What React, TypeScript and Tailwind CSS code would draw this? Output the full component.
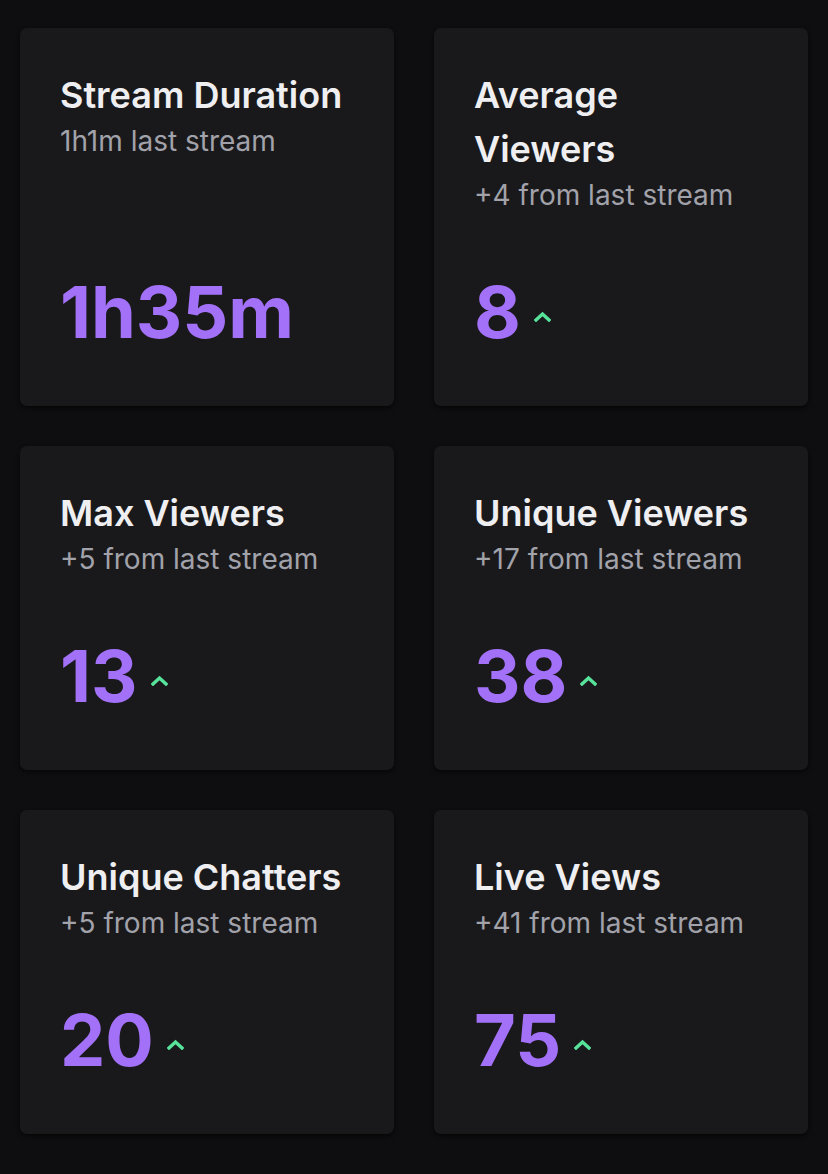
import React from "react";

type Stat = { title: string; sub: string; value: string; up?: boolean };

const stats: Stat[] = [
  { title: "Stream Duration", sub: "1h1m last stream", value: "1h35m" },
  { title: "Average Viewers", sub: "+4 from last stream", value: "8", up: true },
  { title: "Max Viewers", sub: "+5 from last stream", value: "13", up: true },
  { title: "Unique Viewers", sub: "+17 from last stream", value: "38", up: true },
  { title: "Unique Chatters", sub: "+5 from last stream", value: "20", up: true },
  { title: "Live Views", sub: "+41 from last stream", value: "75", up: true },
];

function Chevron() {
  return (
    <svg width="17" height="11" viewBox="0 0 17 11" className="ml-[13px] mt-[8px]">
      <path d="M2 9 L8.5 3 L15 9" fill="none" stroke="#58e39b" strokeWidth="3.4" strokeLinecap="square" strokeLinejoin="miter" />
    </svg>
  );
}

function Card({ s }: { s: Stat }) {
  return (
    <div className="flex flex-col rounded-[7px] bg-[#19191c] pl-10 pr-12 pt-10 pb-10 shadow-[0_2px_4px_rgba(0,0,0,0.6)]">
      <div className="text-[36px] leading-[54px] font-semibold text-[#efeff1]">{s.title}</div>
      <div className="text-[28px] leading-[39px] text-[#a2a2aa]">{s.sub}</div>
      <div className="mt-auto pt-[43px] flex items-center">
        <span className="text-[72px] leading-[108px] font-bold text-[#a371f7]">{s.value}</span>
        {s.up && <Chevron />}
      </div>
    </div>
  );
}

export default function App() {
  return (
    <div
      className="min-h-[1174px] bg-[#0e0e10] px-5 pt-7 pb-10"
      style={{ fontFamily: "Inter, 'Noto Sans', sans-serif" }}
    >
      <div className="grid grid-cols-2 gap-10">
        {stats.map((s) => (
          <Card key={s.title} s={s} />
        ))}
      </div>
    </div>
  );
}
